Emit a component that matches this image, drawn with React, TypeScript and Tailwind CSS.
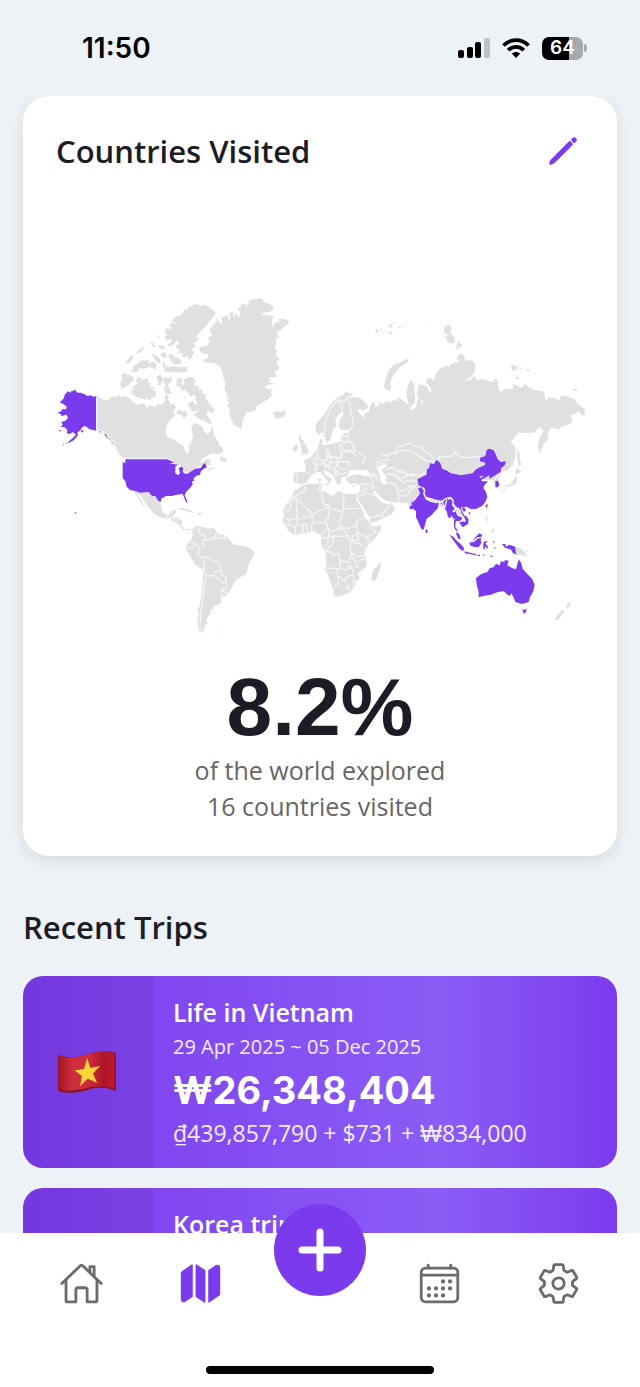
import React from 'react';
import { IoCalendarOutline, IoHomeOutline, IoMap, IoPencil, IoSettingsOutline } from 'react-icons/io5';

interface Trip {
  id: number;
  title: string;
  dates: string;
  total: string;
  breakdown: string;
  flag?: React.ReactNode;
}

const VietnamFlag: React.FC = () => (
  <svg viewBox="0 0 58 42" className="h-[42px] w-[58px]" role="img" aria-label="Vietnam">
    <defs>
      <linearGradient id="flag-red" x1="0" x2="1" y1="0" y2="0">
        <stop offset="0" stopColor="#a81524" />
        <stop offset="0.25" stopColor="#cf3040" />
        <stop offset="0.55" stopColor="#c92c3a" />
        <stop offset="0.8" stopColor="#b0142a" />
        <stop offset="1" stopColor="#b81a26" />
      </linearGradient>
    </defs>
    <path d="M0 4C12 8 21 6 31 3S49 0 58 2V40C48 36 38 36 29 39S9 43 0 40Z" fill="#861326" />
    <path d="M1 5C12 8 21 6 31 3S49 1 57 2V38C48 34 38 35 29 37S9 41 1 38Z" fill="url(#flag-red)" />
    <path d="M29 7L32.500 17 42 15 35 22.500 39 32 30 27.500 22 35 24 25 16.500 19.500 26 18Z" fill="#fcd535" />
  </svg>
);

const trips: Trip[] = [
  {
    id: 1,
    title: 'Life in Vietnam',
    dates: '29 Apr 2025 ~ 05 Dec 2025',
    total: '₩26,348,404',
    breakdown: '₫439,857,790 + $731 + ₩834,000',
    flag: <VietnamFlag />,
  },
  { id: 2, title: 'Korea trip', dates: '', total: '', breakdown: '' },
];

// Shapes are grouped in map sheets. Each sheet has its own origin.
const sheets = [
  {
    id: 'north-america',
    origin: 'translate(150 870)',
    land: 'M140 318L156 328 172 330 186 320 200 322 204 312 212 322 226 318 240 326 250 336 262 344 276 340 288 346 290 356 300 344 316 352 322 342 336 344 346 332 344 314 356 318 354 330 360 334 360 344 372 340 378 352 370 362 376 378 366 384 358 392 350 408 346 426 352 440 370 448 384 458 398 464 402 474 410 492 418 486 416 468 424 456 430 440 424 424 428 402 436 398 448 406 458 410 462 424 472 432 484 422 484 408 492 424 490 432 496 440 502 452 508 458 506 464 518 474 520 486 508 492 484 490 470 498 456 508 446 520 456 516 470 508 484 508 478 518 484 526 460 522 446 530 430 540 414 552 400 544 390 526 376 522 366 512 346 506 224 506 214 500 206 490 200 476 192 464 186 450 172 436 158 424 140 420ZM498 66L486 60 478 50 462 44 452 48 444 44 432 42 424 50 418 48 410 60 402 60 398 72 384 80 380 78 370 88 362 92 376 98 386 106 364 98 358 104 366 114 356 118 346 112 348 120 342 124 352 136 342 142 352 152 366 146 364 156 352 164 360 170 374 160 382 150 388 160 376 170 388 182 384 192 372 190 398 188 396 200 408 202 416 196 416 210 424 204 432 186 424 178 438 168 430 160 448 148 438 140 448 128 458 118 470 106 480 92 490 80ZM350 228L358 232 372 228 388 232 412 230 412 244 392 248 372 246 352 248 348 238ZM354 196L366 192 374 200 388 206 396 216 386 224 370 222 362 212ZM262 222L276 210 286 214 296 208 296 222 310 214 320 224 318 240 298 230 282 238 268 234 260 248 240 242 254 236 248 230ZM226 220L240 200 252 196 248 208 236 220ZM258 190L270 178 282 172 280 178 266 190ZM300 160L312 154 308 162 318 168 312 174ZM302 190L316 194 330 206 332 222 318 214 310 200ZM322 168L338 166 346 176 334 178ZM330 190L346 186 352 200 340 206ZM336 216L346 220 350 246 344 244ZM322 134L330 138 326 142ZM214 254L226 248 232 256 240 254 250 262 252 272 242 276 238 284 228 290 214 296 210 280 216 270ZM242 304L252 300 246 292 256 286 266 282 256 272 264 262 280 270 290 264 296 272 290 278 300 278 302 292 314 292 308 300 318 302 316 320 306 324 300 332 290 324 286 330 270 324 252 318ZM318 260L332 254 340 268 334 282 322 290 326 274ZM342 260L356 264 366 258 364 274 354 286 360 300 364 312 348 312 342 296 348 284 340 276ZM376 264L384 268 392 262 398 270 394 284 404 284 402 268 416 262 430 262 438 274 430 284 446 290 446 300 456 298 456 308 468 316 466 324 474 334 482 346 494 356 488 370 474 362 470 372 478 386 486 394 484 404 472 398 462 390 454 392 440 380 428 376 440 368 446 356 438 346 442 336 434 326 440 320 430 314 422 322 414 308 402 298 396 306 390 290 378 286 382 274ZM414 340L428 332 434 342 446 348 442 362 426 364 418 352ZM378 366L392 356 394 366 404 360 414 374 402 384 392 374 382 372ZM396 320L408 322 404 328Z',
    visited: 'M140 318L130 320 122 316 112 318 102 312 92 308 82 308 74 298 70 304 64 302 62 308 54 304 44 314 42 324 34 332 30 338 40 342 50 350 48 358 36 358 34 364 22 368 32 372 34 378 50 374 54 384 46 392 34 396 38 404 32 410 44 412 52 420 50 430 60 432 68 426 78 434 66 446 52 458 58 458 72 450 84 436 82 428 92 420 96 412 104 408 112 412 118 418 130 420 140 422ZM94 420L100 420 98 428 94 426ZM26 420L32 420 32 424 28 424ZM38 464L42 462 42 466ZM46 460L50 458 50 462ZM142 420L152 424 158 422 152 428ZM162 430L168 428 174 434 168 440ZM168 440L174 442 172 446ZM176 436L182 446 184 452 178 448ZM184 450L190 460 186 462Z',
    borders: 'M140 320L140 420 158 424 172 434 186 452 194 466M224 506L346 506 366 512',
  },
  {
    id: 'north-atlantic',
    origin: 'translate(570 870)',
    land: 'M208 24L222 30 218 36 240 42 250 50 250 62 222 68 214 74 236 76 250 78 246 92 248 112 258 96 270 96 266 88 282 86 296 92 296 100 280 112 270 124 262 122 264 136 270 140 258 146 258 162 254 172 262 184 256 194 268 206 258 218 264 224 268 238 256 244 256 252 262 258 254 262 234 262 246 270 234 272 252 282 234 284 222 292 234 298 250 298 240 306 246 316 234 328 214 340 200 348 196 362 180 366 170 366 166 374 158 392 156 410 152 418 140 408 130 404 128 396 122 388 122 380 116 366 120 360 112 348 118 338 110 332 118 324 108 318 112 308 104 300 106 280 100 262 96 244 88 228 70 218 48 218 36 210 52 206 56 194 36 190 28 182 30 172 50 168 58 156 54 144 68 134 58 124 66 108 80 96 78 82 90 100 98 102 94 84 110 74 118 90 122 82 116 70 128 66 134 84 136 68 148 84 150 66 142 54 152 52 156 40 172 46 178 38 174 32 192 28ZM248 364L254 368 260 362 270 366 282 360 288 372 278 382 264 386 252 382 258 378 248 372ZM376 404L390 386 404 372 412 358 424 340 440 324 458 316 464 308 472 304 476 310 486 310 482 322 500 322 516 328 532 344 534 354 520 362 506 356 504 364 514 376 524 386 522 372 538 364 538 350 550 334 556 340 554 352 566 346 570 326 570 540 348 540 342 510 362 502 372 488 384 476 386 462 392 446 398 448 396 462 404 474 420 474 440 468 456 464 452 446 460 440 458 430 474 428 484 416 468 420 452 420 446 408 450 388 462 372 456 364 444 374 438 386 436 398 440 408 430 418 426 434 420 450 410 458 404 440 398 426 384 436 378 424ZM326 440L330 434 336 440 332 448 342 450 340 458 350 468 350 474 356 480 352 492 330 496 338 488 330 484 338 478 330 472 334 464 328 456ZM310 470L320 462 324 468 322 482 308 486ZM554 120L562 118 568 126 560 128Z',
    visited: '',
    borders: 'M398 444L404 430 404 400 410 384 418 362 430 344 442 330 456 334 470 328 474 318 484 326M442 330L456 344 458 366M470 328L480 340 482 370 490 394 484 416M384 478L380 500 392 512 410 510 414 498 410 474M458 440L476 440 474 430M452 452L468 456 478 452M476 440L480 456 490 462 494 482 464 488 456 468M494 482L504 486 526 500 522 516 512 522M414 498L440 504 452 504 460 490M440 504L444 516 474 514 480 526M362 504L380 512M410 510L420 518 438 516M444 516L436 534M370 516L384 540M400 512L404 530 420 534',
  },
  {
    id: 'siberia',
    origin: 'translate(1140 930)',
    land: 'M0 280L12 280 20 274 32 276 40 270 50 274 52 262 66 268 78 280 86 284 80 260 80 236 90 214 94 206 98 218 104 226 102 244 106 262 104 280 88 294 98 300 108 292 112 268 124 268 124 282 130 286 128 270 112 262 112 244 118 226 112 218 124 226 130 224 142 232 150 252 154 240 148 228 138 218 140 206 152 204 162 212 168 190 180 176 196 168 206 170 214 162 226 158 238 154 230 146 236 136 244 130 252 138 256 152 276 150 286 162 284 186 276 198 250 216 270 210 286 196 290 212 306 206 326 212 340 216 342 208 352 208 356 236 364 246 374 236 388 238 400 236 400 222 414 228 424 234 436 222 446 232 462 240 488 244 494 254 498 276 504 262 526 264 538 272 544 256 566 260 584 268 594 282 606 292 614 296 614 316 606 316 594 302 590 310 572 316 578 332 566 344 546 350 536 358 516 354 510 350 516 338 504 344 496 356 488 362 480 350 470 360 462 368 414 368 402 384 386 402 388 408 400 408 408 420 406 440 400 462 384 480 370 486 350 510 0 510ZM502 346L516 340 512 356 502 368 506 384 492 400 486 418 480 430 474 412 476 390 484 374 494 358ZM414 416L420 436 418 448 424 462 416 470 412 450 410 430ZM406 486L412 476 424 482 418 490 408 494ZM86 148L84 156 64 168 50 182 38 200 30 220 34 236 28 244 12 234 16 214 20 196 28 178 44 162 64 156 76 148ZM194 50L206 44 214 52 212 68 204 76 192 66ZM186 44L190 46 188 50ZM196 80L206 76 214 70 224 84 222 100 210 100 202 92ZM188 78L196 76 194 82ZM234 94L240 100 248 108 238 112 226 122 230 110ZM394 166L404 164 408 170 416 162 410 182 404 178 400 186 394 178ZM418 168L424 176 420 180ZM432 174L440 178 450 180 446 186ZM406 196L420 206 410 208ZM578 240L590 236 594 240 584 244ZM0 56L6 58 4 62 0 62ZM24 50L34 42 40 50 30 54ZM38 38L44 36 46 42ZM52 50L62 50 56 56ZM62 48L70 46 72 52ZM26 66L34 62 36 70 28 74ZM44 64L50 66 46 70ZM132 52L138 50 138 54Z',
    visited: '',
    borders: 'M0 434L24 436 30 430 50 430 50 414 66 406 92 400 104 408 122 410 132 424 146 430 158 444 168 450 180 446 176 440 200 440 218 438 224 426 240 440 266 444 284 438 300 442M168 450L152 464 144 480 130 490 112 500M0 460L16 462 20 480 30 474 50 482 62 488 74 486 84 496 104 490M26 490L50 494 62 506 84 500M370 484L356 494 344 506',
  },
  {
    id: 'americas',
    origin: 'translate(150 1320)',
    land: 'M252 154L270 158 296 156 306 168 316 168 324 182 332 188 334 206 340 220 350 226 360 222 364 212 378 210 376 220 370 228 362 232 350 236 340 234 324 228 308 218 300 206 290 194 280 180 270 166 260 160 266 172 276 186 284 198 280 198 270 184 258 166ZM362 234L372 232 386 234 396 242 394 258 404 266 416 268 424 266 420 272 410 270 400 270 388 256 374 246 362 240ZM382 206L396 204 412 208 426 214 432 218 418 216 400 210ZM438 218L450 218 460 222 448 226ZM412 220L420 222 414 224ZM508 56L516 46 520 54 530 56 528 66 512 64ZM470 90L482 84 490 80 496 82 486 88 474 92ZM426 270L434 262 444 256 450 262 460 260 474 266 490 264 500 274 508 284 524 284 534 292 542 302 552 314 566 316 590 320 606 328 614 340 606 356 598 366 594 384 588 402 574 410 560 418 552 430 544 444 534 460 526 470 516 468 512 478 514 488 504 494 492 498 490 508 480 510 482 520 474 530 468 544 474 548 464 556 462 570 460 578 444 574 448 566 442 556 442 544 446 520 442 510 448 500 452 480 456 450 458 420 460 388 444 380 432 370 422 350 412 334 408 324 414 308 424 298 428 284ZM506 574L512 576 508 578Z',
    visited: 'M218 66L226 70 226 58 350 58 362 62 372 68 358 72 370 72 384 74 376 80 376 100 384 106 390 100 386 84 394 80 400 84 398 94 402 100 412 102 424 94 436 86 452 84 460 72 466 70 470 82 456 90 452 96 450 104 438 108 430 116 434 122 426 124 428 134 418 146 408 156 404 166 412 184 410 190 402 172 398 162 380 164 366 168 348 168 334 176 332 186 324 182 316 168 306 168 296 156 270 158 252 152 240 150 230 140 226 124 218 114 218 90ZM74 216L80 218 76 222Z',
    borders: 'M414 326L428 322 436 310 418 304M436 310L448 324 462 318 458 300 470 300 484 296 496 290 500 274M450 262L444 274 452 282 464 286 470 300M484 296L490 300 506 294 524 296 536 294M508 284L508 294M524 284L524 296M448 324L442 340 452 352 464 352 462 386M464 352L480 350 484 360 500 366 512 376 512 392M470 408L492 406 496 396 512 392 516 404 528 412 528 426 516 428 492 406M462 386L468 408 462 440 458 480 452 520 450 560 458 576M528 426L534 440 516 450 512 468M516 450L534 462M350 226L352 234M374 232L370 240M386 236L380 246M404 266L408 272',
  },
  {
    id: 'africa',
    origin: 'translate(810 1320)',
    land: 'M104 60L118 56 134 40 146 20 320 -20 510 -20 510 190 430 200 416 196 410 184 384 188 362 186 350 182 340 178 326 164 314 152 308 150 314 164 326 178 332 186 344 190 352 194 364 190 372 202 374 208 366 222 346 232 330 240 304 250 300 246 298 232 288 216 278 200 266 180 262 168 262 160 266 160 270 150 272 134 256 130 240 132 230 124 228 112 240 108 262 102 284 108 300 108 304 104 292 92 274 82 266 88 262 80 248 82 238 90 236 100 232 108 220 112 212 114 214 130 206 134 198 126 192 112 186 104 174 96 166 90 160 92 166 104 178 112 188 118 182 122 180 132 174 124 160 108 152 96 144 96 134 100 128 102 120 110 114 122 108 130 96 132 84 130 72 128 70 110 74 96 96 96 106 96 108 80 104 72ZM164 132L176 130 176 138ZM144 116L152 114 152 126 146 126ZM210 142L222 143 222 146ZM246 138L256 134 252 142ZM90 140L100 136 120 132 152 130 156 134 154 150 166 156 180 164 192 168 198 156 206 152 222 160 244 162 258 162 262 170 258 178 270 196 278 214 284 232 296 244 304 256 316 260 332 256 334 264 326 280 314 296 298 312 288 324 284 338 288 354 290 376 280 388 264 398 268 414 258 424 254 440 240 456 224 464 200 470 192 464 190 448 180 426 174 404 164 386 170 368 166 350 168 334 158 324 152 306 156 294 152 284 138 278 126 272 112 280 96 280 80 286 66 282 54 270 44 256 38 244 38 234 44 224 38 212 44 200 52 188 62 178 66 166 74 152 84 146ZM330 366L334 376 328 392 322 412 314 424 304 420 306 404 310 388 322 380Z',
    visited: '',
    borders: 'M152 132L146 148 156 156 158 180 160 190 178 204 166 204 132 220 126 232M104 138L106 150 92 160 66 172M66 174L78 174 118 212 126 222M78 174L82 236M52 188L64 190 66 178M66 176L64 190 58 210 38 212M82 236L56 240 44 234M56 240L60 256 44 254M60 256L76 262 84 240 100 232 118 228 126 232 132 248 124 254 126 272M76 262L76 284M100 254L98 280M84 256L110 252M110 252L114 278M160 190L178 196 180 204 216 216 216 230 206 244 214 258 206 270 220 262 234 266 248 260 258 262M222 160L220 206 272 206M220 206L216 216M132 248L166 248 174 262 154 282M178 204L176 230 166 248M174 262L178 276 204 268 206 260M178 276L174 292 190 288 216 290 232 286 236 300M156 296L174 292 174 310 162 322M190 288L188 310 176 324 168 330M168 334L184 336 190 346 206 342 210 360 222 364 236 368 240 350 246 354 242 330 240 316 246 302 236 300 234 286 220 268M258 262L264 240 280 232M264 240L258 256 264 280 286 290 294 288 320 276M302 258L300 264 320 276M264 280L246 290 250 308 268 310 286 326M246 302L266 300 264 284M294 288L294 314M284 334L280 348 262 350 246 340M246 354L260 366 264 382 252 378M288 356L266 362M164 384L202 386 212 386 210 360M202 386L202 402 206 430 190 440M206 408L222 424 236 408 250 404 250 388 236 382 226 390 212 386M250 404L252 420 258 428M228 440L236 436 240 446 232 450ZM246 424L252 428 248 436M226 390L248 376M262 168L272 168 286 158 314 166M272 134L290 132 300 134 306 148M286 158L290 140M272 158L286 144M300 110L308 122 308 134 316 146M300 108L316 108 324 118M304 98L320 106M298 232L320 228 336 224 350 206 362 196M336 224L340 234M346 132L366 128 380 136 382 154 388 168 384 186M382 154L404 150 416 140 434 138 440 146M388 168L410 166 420 150 434 138M320 84L322 66 338 60 354 62 354 46 374 38 398 32 412 30 428 38 450 50 470 64 490 62M350 100L370 106 388 118 404 130M354 86L370 80 380 92 396 92 410 106 440 106M404 130L412 120 420 124 440 122M76 100L82 102 80 128M106 96L124 104M142 60L140 76 134 84 138 98M140 76L160 70 172 76M160 70L166 56 180 50 166 40M176 30L178 48 210 54 214 34M178 48L186 68 172 76 186 84 196 96 190 110M186 68L206 64 216 66 236 66 242 80M206 64L204 80 216 88 234 88M196 84L204 100 214 102 232 98M204 100L196 112M214 34L240 30 262 50M216 10L230 4 250 12 254 30M214 34L206 18 218 14M240 66L234 76',
  },
  {
    id: 'asia-pacific',
    origin: 'translate(1200 1320)',
    land: 'M0 0L326 0 346 20 346 50 336 72 322 88 310 94 298 104 296 116 298 122 286 126 280 124 282 112 270 108 60 180 40 188 0 190ZM112 184L126 184 128 204 118 198ZM164 208L174 204 184 212 194 226 196 234 186 232 176 222 168 220ZM348 320L362 326 372 334 384 350 370 346 360 344 348 346ZM376 330L386 328 384 336ZM258 226L264 230 260 240 266 250 258 244ZM276 268L282 266 282 276 274 278ZM350 84L358 90 366 92 356 100 344 98ZM348 106L352 122 346 134 330 138 314 142 316 136 332 132 340 120ZM302 150L308 150 306 160ZM310 146L318 144 314 150ZM504 486L508 490 514 490 508 500 498 508 500 496ZM488 508L494 514 482 530 472 540 464 536 474 524Z',
    visited: 'M52 118L64 112 80 104 80 90 88 82 90 70 102 72 108 60 116 64 122 72 126 86 142 92 152 100 184 106 204 102 218 100 228 88 240 82 254 76 256 68 240 64 240 54 256 48 260 30 268 26 280 30 288 44 292 56 302 66 318 64 314 76 304 84 302 96 288 104 276 112 268 116 268 106 258 112 246 118 244 124 264 124 254 134 250 144 258 156 262 170 256 186 246 198 230 206 214 208 200 200 184 202 178 208 168 200 160 190 158 176 148 172 136 176 126 184 110 182 92 176 78 172 72 160 74 148 68 142 56 136ZM206 216L212 218 208 224ZM256 196L264 192 260 206ZM286 124L294 122 298 134 294 142 286 142ZM52 146L64 142 72 152 70 164 78 176 92 184 110 186 116 190 114 204 106 212 94 226 80 236 76 250 72 266 66 270 60 258 54 244 48 232 48 214 40 206 30 208 28 200 36 196 34 184 46 176 56 164ZM120 186L136 178 146 176 138 190 132 200 126 194ZM140 184L150 176 160 182 156 194 164 206 158 214 164 228 160 240 156 226 150 234 144 232 140 214 134 206ZM158 218L168 214 172 226 186 230 188 240 176 244 170 242 166 250 166 262 174 272 168 272 162 262 162 246 164 236ZM178 206L192 202 198 210 190 218 198 228 206 238 204 252 194 258 188 262 178 248 188 246 198 246 194 234 184 218 182 210ZM178 246L194 244 194 256 184 256ZM168 276L178 282 182 296 176 298 170 286ZM148 284L160 290 170 302 182 312 192 324 190 334 180 328 168 312 158 298ZM194 334L210 338 228 342 228 346 208 342 194 340ZM232 344L240 344 240 348 232 348ZM246 344L254 344 252 348ZM270 350L278 346 276 352ZM208 304L220 302 226 292 238 280 246 284 242 300 244 310 236 322 220 320 210 316ZM250 310L254 304 264 304 256 310 264 320 262 328 256 318 254 328 250 328ZM282 322L290 324 284 326ZM280 300L284 306 280 310ZM306 312L316 312 318 320 328 314 346 320 348 344 338 338 332 328 316 324ZM78 266L84 274 80 280 76 276ZM228 414L244 402 262 396 270 384 280 382 288 372 300 376 302 364 314 366 314 360 326 362 322 376 336 384 348 388 352 372 356 358 364 370 368 386 380 400 396 416 404 434 400 454 390 472 386 486 366 492 346 486 340 470 334 460 330 468 322 464 312 454 294 456 272 464 250 468 236 472 236 456 230 434ZM366 508L372 510 380 506 378 516 372 522Z',
    borders: 'M68 142L74 150 72 162 78 172 92 176 110 182 126 184 138 176 150 172 160 182 158 194 166 204 178 206M74 164L78 176 92 184 110 188 108 182M52 146L58 160 46 176 36 186M118 186L128 186 132 204M140 180L134 204M158 214L166 210M170 216L174 226 188 230 186 242 178 246M184 206L196 228M208 306L222 304 232 294 244 292M240 112L248 108',
  },
];

const WorldMap: React.FC = () => (
  <svg viewBox="168 879 1584 1023" className="w-full overflow-visible" role="img" aria-label="World map of visited countries">
    {sheets.map(sheet => (
      <path key={sheet.id} d={sheet.land} transform={sheet.origin} fill="#e0e0e0" />
    ))}
    {/* Caspian Sea */}
    <path
      d="M322 84L332 74 344 72 346 82 336 88 340 98 350 108 348 120 350 130 338 132 330 120 332 108 324 96Z"
      transform="translate(810 1320)"
      fill="#fff"
    />
    {sheets.map(sheet => (
      <g key={sheet.id} transform={sheet.origin}>
        <path d={sheet.visited} fill="#7c3aed" />
        <path d={sheet.borders} fill="none" stroke="#f1f5f9" strokeWidth="4" strokeLinejoin="round" />
      </g>
    ))}
  </svg>
);

const StatusBar: React.FC = () => (
  <header className="flex h-24 shrink-0 items-center justify-between pr-[53px] pl-[82px] font-['Inter',sans-serif] text-black">
    <span className="text-[28px] leading-8 font-semibold">11:50</span>
    <div className="flex items-center gap-3">
      <svg viewBox="0 0 32 20" className="h-5 w-8" aria-hidden="true">
        <rect x="0" y="12" width="6" height="8" rx="2" />
        <rect x="9" y="9" width="6" height="11" rx="2" />
        <rect x="17" y="4" width="6" height="16" rx="2" />
        <rect x="26" y="0" width="6" height="20" rx="2" fill="#bec2c5" />
      </svg>
      <svg viewBox="0 0 28 20" className="h-5 w-7" fill="none" stroke="currentColor" strokeWidth="3.800" aria-hidden="true">
        <path d="M1.500 7.500C8.500 0.300 19.500 0.300 26.500 7.500" />
        <path d="M6.200 12.200C10.500 7.700 17.500 7.700 21.800 12.200" />
        <path d="M14 20L9.800 15.600C12.200 13.300 15.800 13.300 18.200 15.600Z" fill="currentColor" stroke="none" />
      </svg>
      <div className="flex items-center gap-px">
        <div className="flex h-[23px] w-[41px] items-center justify-center rounded-[7px] bg-linear-to-r from-black from-65% to-[#a6a9ab] to-65% text-[19px] leading-5 font-semibold text-white">
          64
        </div>
        <div className="h-2 w-[3px] rounded-r-full bg-[#a6a9ab]" />
      </div>
    </div>
  </header>
);

const TripCard: React.FC<{ trip: Trip }> = ({ trip }) => (
  <article className="flex min-h-[192px] overflow-hidden rounded-[20px] bg-linear-to-r from-[#7c3aed] via-[#8b5cf6] via-70% to-[#7c3aed]">
    <div className="flex w-[130px] shrink-0 items-center justify-center bg-black/5 pr-0.5">{trip.flag}</div>
    <div className="min-w-0 flex-1 px-5 py-[18px] text-white">
      <h3 className="text-[25px] leading-9 font-semibold">{trip.title}</h3>
      <p className="text-[20px] leading-[34px] text-white/90">{trip.dates}</p>
      <p className="font-['Inter',sans-serif] text-[38px] leading-[52px] font-bold">{trip.total}</p>
      <p className="text-[23px] leading-[34px] text-white/90">{trip.breakdown}</p>
    </div>
  </article>
);

const TabBar: React.FC = () => (
  <nav className="relative shrink-0 bg-white pb-[13px] text-[#6b6b6b]">
    <div className="grid h-[100px] grid-cols-5 items-center justify-items-center px-[22px]">
      <button type="button" aria-label="Home">
        <IoHomeOutline className="size-[45px]" />
      </button>
      <button type="button" aria-label="Map" className="text-[#7c3aed]">
        <IoMap className="size-[45px]" />
      </button>
      <button
        type="button"
        aria-label="Add trip"
        className="-mt-[29px] flex size-[92px] items-center justify-center self-start rounded-full bg-[#7c3aed] text-white"
      >
        <svg viewBox="0 0 44 44" className="size-11" stroke="currentColor" strokeWidth="7" strokeLinecap="round">
          <path d="M22 4V40M4 22H40" />
        </svg>
      </button>
      <button type="button" aria-label="Calendar">
        <IoCalendarOutline className="size-[45px]" />
      </button>
      <button type="button" aria-label="Settings">
        <IoSettingsOutline className="size-[45px]" />
      </button>
    </div>
    <div className="mx-auto mt-[33px] h-2 w-[228px] rounded-full bg-black" />
  </nav>
);

const App: React.FC = () => {
  return (
    <div className="flex h-screen flex-col overflow-hidden bg-[#edf2f7] font-['Open_Sans',sans-serif] text-[#1c1b26]">
      <StatusBar />
      <main className="min-h-0 flex-1 overflow-hidden px-[23px]">
        <section className="rounded-[26px] bg-white px-[33px] pt-[35px] pb-8 shadow-[0_4px_16px_rgba(0,0,0,0.1)]">
          <div className="flex items-center justify-between">
            <h1 className="text-[31px] leading-10 font-semibold">Countries Visited</h1>
            <button type="button" aria-label="Edit countries" className="mr-1 text-[#7c3aed]">
              <IoPencil className="size-[34px]" />
            </button>
          </div>
          <div className="mt-[122px]">
            <WorldMap />
          </div>
          <div className="mt-8 text-center">
            <p className="mb-1 font-['Liberation_Sans',sans-serif] text-[82px] leading-[82px] font-bold">8.2%</p>
            <p className="text-[25px] leading-9 text-[#666]">of the world explored</p>
            <p className="text-[25px] leading-9 text-[#666]">16 countries visited</p>
          </div>
        </section>

        <section className="mt-[51px]">
          <h2 className="text-[31px] leading-10 font-semibold">Recent Trips</h2>
          <div className="mt-[29px] flex flex-col gap-5">
            {trips.map(trip => (
              <TripCard key={trip.id} trip={trip} />
            ))}
          </div>
        </section>
      </main>
      <TabBar />
    </div>
  );
};

export default App;
